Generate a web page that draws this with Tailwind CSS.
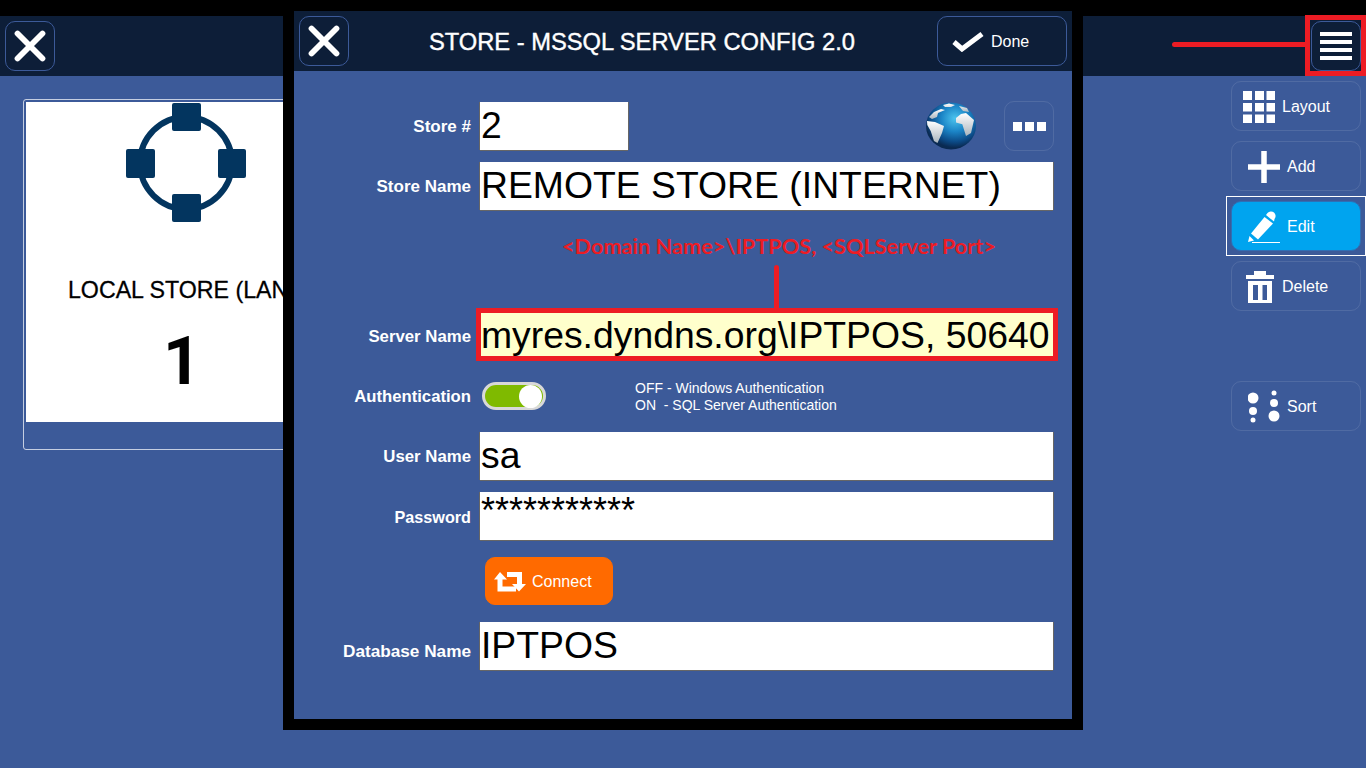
<!DOCTYPE html>
<html lang="en">
<head>
<meta charset="utf-8">
<title>Store - MSSQL Server Config</title>
<script src="https://cdn.jsdelivr.net/npm/@tailwindcss/browser@4"></script>
</head>
<body class="m-0">
<div class="relative w-[1366px] h-[768px] overflow-hidden flex flex-col bg-[#3c5a99] font-['Liberation_Sans',Arial,sans-serif] text-white">
  <div class="h-[16px] bg-black shrink-0"></div>

  <!-- page header -->
  <header class="relative h-[60px] shrink-0 bg-[#0d1e38] flex items-center justify-between px-[5px]">
    <button class="w-[50px] h-[50px] rounded-[10px] border border-[#3c5a99] flex items-center justify-center">
      <svg width="50" height="50" viewBox="0 0 50 50"><path d="M12 12 L38 38 M38 12 L12 38" stroke="#fff" stroke-width="6" stroke-linecap="round"/></svg>
    </button>
    <button class="w-[50px] h-[50px] rounded-[10px] border border-[#3c5a99] flex flex-col items-center justify-center gap-[3.6px]">
      <span class="block w-[32px] h-[4.4px] bg-white"></span>
      <span class="block w-[32px] h-[4.4px] bg-white"></span>
      <span class="block w-[32px] h-[4.4px] bg-white"></span>
      <span class="block w-[32px] h-[4.4px] bg-white"></span>
    </button>
    <!-- red annotation -->
    <div class="absolute right-0 top-[-1px] w-[61px] h-[61px] border-[5px] border-[#ed1c24]"></div>
    <div class="absolute left-[1172px] top-[26px] w-[135px] h-[5px] bg-[#ed1c24] rounded-l-full"></div>
  </header>

  <!-- page body -->
  <main class="flex-1 flex justify-between">
    <section class="pl-[23px] pt-[23px]">
      <div class="w-[318px] h-[351px] border border-white/70 rounded-[3px] pl-[2px] pt-[2px]">
        <div class="w-[312px] h-[320px] bg-white text-black flex flex-col items-center">
          <svg class="mt-[1px] ml-[8px]" width="120" height="120" viewBox="0 0 120 120">
            <circle cx="60" cy="60" r="46" fill="none" stroke="#03355f" stroke-width="6"/>
            <rect x="46" y="0" width="29" height="28" rx="2" fill="#03355f"/>
            <rect x="46" y="91" width="29" height="28" rx="2" fill="#03355f"/>
            <rect x="0" y="46" width="29" height="29" rx="2" fill="#03355f"/>
            <rect x="92" y="46" width="28" height="29" rx="2" fill="#03355f"/>
          </svg>
          <div class="mt-[52px] text-[23.2px] leading-[30px] whitespace-nowrap [-webkit-text-stroke:0.3px_black]">LOCAL STORE (LAN)</div>
          <div class="mt-[19px] font-['Roboto',sans-serif] text-[66px] leading-[76px] font-bold">1</div>
        </div>
      </div>
    </section>

    <aside class="w-[135px] pr-[5px] pt-[5px] flex flex-col gap-[10px] text-[16px]">
      <button class="w-[130px] h-[50px] pt-[2px] rounded-[10px] border border-white/10 flex items-center pl-[11px]">
        <svg width="32" height="32" viewBox="0 0 32 32" fill="#fff">
          <rect x="0" y="0" width="9" height="9"/><rect x="12" y="0" width="9" height="9"/><rect x="23.500" y="0" width="8.500" height="9"/>
          <rect x="0" y="12" width="9" height="8.500"/><rect x="12" y="12" width="9" height="8.500"/><rect x="23.500" y="12" width="8.500" height="8.500"/>
          <rect x="0" y="23.500" width="9" height="8.500"/><rect x="12" y="23.500" width="9" height="8.500"/><rect x="23.500" y="23.500" width="8.500" height="8.500"/>
        </svg>
        <span class="ml-[7px]">Layout</span>
      </button>
      <button class="w-[130px] h-[50px] pt-[2px] rounded-[10px] border border-white/10 flex items-center pl-[16px]">
        <svg width="32" height="32" viewBox="0 0 32 32"><path d="M16 0 V32 M0 16 H32" stroke="#fff" stroke-width="5.500"/></svg>
        <span class="ml-[7px]">Add</span>
      </button>
      <div class="w-[140px] h-[60px] -my-[5px] -ml-[5px] border border-white p-[4px]">
        <button class="w-[130px] h-[50px] pt-[2px] rounded-[10px] border border-[#2f6fb5] bg-[#00a4ef] flex items-center pl-[16px]">
          <svg width="32" height="32" viewBox="0 0 32 32" fill="#fff">
            <path d="M0 31 L1.500 25 L6 29.500 Z"/>
            <path d="M3 22.500 L16.500 6 L25 12.500 L10 28.500 Z"/>
            <path d="M18 4 L19.500 2 A4.500 4.500 0 0 1 26.500 8 L26 10.500 Z"/>
            <rect x="4" y="31" width="28" height="1"/>
          </svg>
          <span class="ml-[7px]">Edit</span>
        </button>
      </div>
      <button class="w-[130px] h-[50px] pt-[2px] rounded-[10px] border border-white/10 flex items-center pl-[14px]">
        <svg width="28" height="32" viewBox="0 0 28 32" fill="#fff">
          <rect x="8" y="0" width="12" height="4"/>
          <rect x="0" y="4" width="28" height="4"/>
          <path fill-rule="evenodd" d="M2 10 H26 V32 H2 Z M7 14 V29 H12 V14 Z M16.500 14 V29 H21 V14 Z"/>
        </svg>
        <span class="ml-[8px]">Delete</span>
      </button>
      <button class="w-[130px] h-[50px] pt-[2px] mt-[60px] rounded-[10px] border border-white/10 flex items-center pl-[16px]">
        <svg width="32" height="36" viewBox="0 0 32 36" fill="#fff">
          <circle cx="5" cy="9" r="5.500"/><circle cx="5" cy="22" r="4"/><circle cx="5" cy="31" r="2.500"/>
          <circle cx="26" cy="4" r="2.500"/><circle cx="26" cy="14" r="4"/><circle cx="26" cy="27" r="5.500"/>
        </svg>
        <span class="ml-[7px]">Sort</span>
      </button>
    </aside>
  </main>

  <!-- modal -->
  <div class="absolute left-[283px] top-0 w-[800px] h-[730px] bg-black p-[11px]">
    <div class="w-[778px] h-[708px] bg-[#3c5a99] flex flex-col">
      <div class="h-[60px] shrink-0 bg-[#0d1e38] flex items-center justify-between px-[5px]">
        <button class="w-[50px] h-[50px] rounded-[10px] border border-[#3c5a99] flex items-center justify-center">
          <svg width="50" height="50" viewBox="0 0 50 50"><path d="M12 12 L38 38 M38 12 L12 38" stroke="#fff" stroke-width="6" stroke-linecap="round"/></svg>
        </button>
        <div class="text-[23.7px] whitespace-nowrap -ml-[2px] pt-[4px] [-webkit-text-stroke:0.4px_white]">STORE - MSSQL SERVER CONFIG 2.0</div>
        <button class="w-[130px] h-[50px] pt-[2px] rounded-[10px] border border-[#3c5a99] flex items-center pl-[14px] text-[16px]">
          <svg width="32" height="20" viewBox="0 0 32 20"><path d="M2 10 L10 17 L30 2" fill="none" stroke="#fff" stroke-width="5"/></svg>
          <span class="ml-[7px]">Done</span>
        </button>
      </div>

      <div class="pt-[31px] flex flex-col">
        <!-- Store # -->
        <div class="flex items-center h-[48px] mb-[12px]">
          <div class="w-[177px] mr-[9px] pt-[2px] text-right text-[17px] font-bold">Store #</div>
          <div class="w-[148px] h-[48px] bg-white shadow-[-1px_0_0_#666,1px_0_0_#666,0_1px_0_#666] text-black text-[37.33px] leading-[47px] pl-[1px] overflow-hidden">2</div>
          <svg class="ml-[297px]" width="52" height="48" viewBox="0 0 52 48">
            <defs>
              <radialGradient id="sea" cx="58%" cy="34%" r="62%">
                <stop offset="0" stop-color="#4cc4ee"/>
                <stop offset="0.45" stop-color="#1b84c6"/>
                <stop offset="0.8" stop-color="#0c4a86"/>
                <stop offset="1" stop-color="#0a2a52"/>
              </radialGradient>
              <linearGradient id="land" x1="0" y1="0" x2="0" y2="1">
                <stop offset="0" stop-color="#ffffff"/>
                <stop offset="1" stop-color="#a9b4bd"/>
              </linearGradient>
            </defs>
            <ellipse cx="26" cy="24" rx="25" ry="23.500" fill="url(#sea)"/>
            <path d="M2 19 L10 20 L19 24 L17 31 L12.500 41 L9 39 L5.700 29 L2.300 23 Z" fill="url(#land)"/>
            <path d="M4 15 L9 10 L16 7 L20 8 L13 11 L12 15 L7 17 Z" fill="url(#land)"/>
            <path d="M31 16 L36 12 L41 11 L49 18 L46 31 L41 34 L37.300 22.300 L31 20.600 Z" fill="url(#land)"/>
            <path d="M18 3 L24 1.500 L30 3 L26 5 L20 5 Z M34 4 L42 6 L44 10 L38 9 Z" fill="url(#land)"/>
          </svg>
          <button class="ml-[27px] w-[50px] h-[50px] rounded-[10px] border border-white/10 flex items-center justify-center gap-[3px]">
            <span class="block w-[9px] h-[9px] bg-white"></span>
            <span class="block w-[9px] h-[9px] bg-white"></span>
            <span class="block w-[9px] h-[9px] bg-white"></span>
          </button>
        </div>

        <!-- Store Name -->
        <div class="flex items-center h-[48px] mb-[12px]">
          <div class="w-[177px] mr-[9px] pt-[2px] text-right text-[17px] font-bold">Store Name</div>
          <div class="w-[573px] h-[48px] bg-white shadow-[-1px_0_0_#666,1px_0_0_#666,0_1px_0_#666] text-black text-[37.33px] leading-[47px] pl-[1px] whitespace-nowrap overflow-hidden">REMOTE STORE (INTERNET)</div>
        </div>

        <!-- Annotation -->
        <div class="h-[86px] flex flex-col items-center pl-[192px] pt-[12px]">
          <div class="h-[24px] font-['Lato',sans-serif] font-bold text-[21.7px] leading-[24px] text-[#ed1c24] whitespace-nowrap">&lt;Domain Name&gt;\IPTPOS, &lt;SQLServer Port&gt;</div>
          <div class="mt-[7px] w-[5px] flex-1 bg-[#ed1c24] rounded-t-full -ml-[5px]"></div>
        </div>

        <!-- Server Name -->
        <div class="flex items-center h-[53px] mb-[11px]">
          <div class="w-[177px] mr-[5px] pt-[2px] text-right text-[16.8px] font-bold mt-[3px]">Server Name</div>
          <div class="w-[582px] h-[53px] bg-[#ffffcc] border-[5px] border-[#ed1c24] text-black text-[37.33px] leading-[44px] whitespace-nowrap overflow-hidden">myres.dyndns.org\IPTPOS, 50640</div>
        </div>

        <!-- Authentication -->
        <div class="flex items-center h-[48px] mb-[12px]">
          <div class="w-[177px] mr-[11px] pt-[2px] text-right text-[16.7px] font-bold">Authentication</div>
          <div class="w-[64px] h-[28px] rounded-full border-[3px] border-[#d8d8d8] bg-[#7fba00] flex items-center justify-end pr-[1px]">
            <span class="block w-[23px] h-[23px] rounded-full bg-white"></span>
          </div>
          <div class="ml-[89px] pt-[2px] text-[14px] leading-[17px] whitespace-pre">OFF - Windows Authentication
ON  - SQL Server Authentication</div>
        </div>

        <!-- User Name -->
        <div class="flex items-center h-[48px] mb-[12px]">
          <div class="w-[177px] mr-[9px] pt-[2px] text-right text-[16.8px] font-bold">User Name</div>
          <div class="w-[573px] h-[48px] bg-white shadow-[-1px_0_0_#666,1px_0_0_#666,0_1px_0_#666] text-black text-[37.33px] leading-[47px] pl-[1px]">sa</div>
        </div>

        <!-- Password -->
        <div class="flex items-center h-[48px] mb-[17px]">
          <div class="w-[177px] mr-[9px] pt-[2px] text-right text-[16.2px] font-bold">Password</div>
          <div class="w-[573px] h-[48px] bg-white shadow-[-1px_0_0_#666,1px_0_0_#666,0_1px_0_#666] text-black text-[36px] leading-[38px] pl-[1px]">***********</div>
        </div>

        <!-- Connect -->
        <div class="flex items-center h-[48px] mb-[17px] pl-[191px]">
          <button class="w-[128px] h-[48px] pt-[2px] rounded-[10px] border border-[#ff6a00] bg-[#ff6a00] flex items-center pl-[8px] text-[16px]">
            <svg width="32" height="20" viewBox="0 0 32 20" fill="#fff">
              <path d="M6 0 L13 7.500 H8.500 V14.500 H22 V19.500 H3.500 V7.500 H0 Z"/>
              <path d="M13 0 H28 V12 H32 L25 19.500 L18 12 H23 V5 H13 Z"/>
            </svg>
            <span class="ml-[6px]">Connect</span>
          </button>
        </div>

        <!-- Database Name -->
        <div class="flex items-center h-[48px]">
          <div class="w-[177px] mr-[9px] pt-[2px] text-right text-[17.2px] font-bold mt-[10px]">Database Name</div>
          <div class="w-[573px] h-[48px] bg-white shadow-[-1px_0_0_#666,1px_0_0_#666,0_1px_0_#666] text-black text-[37.33px] leading-[47px] pl-[1px]">IPTPOS</div>
        </div>
      </div>
    </div>
  </div>
</div>
</body>
</html>
